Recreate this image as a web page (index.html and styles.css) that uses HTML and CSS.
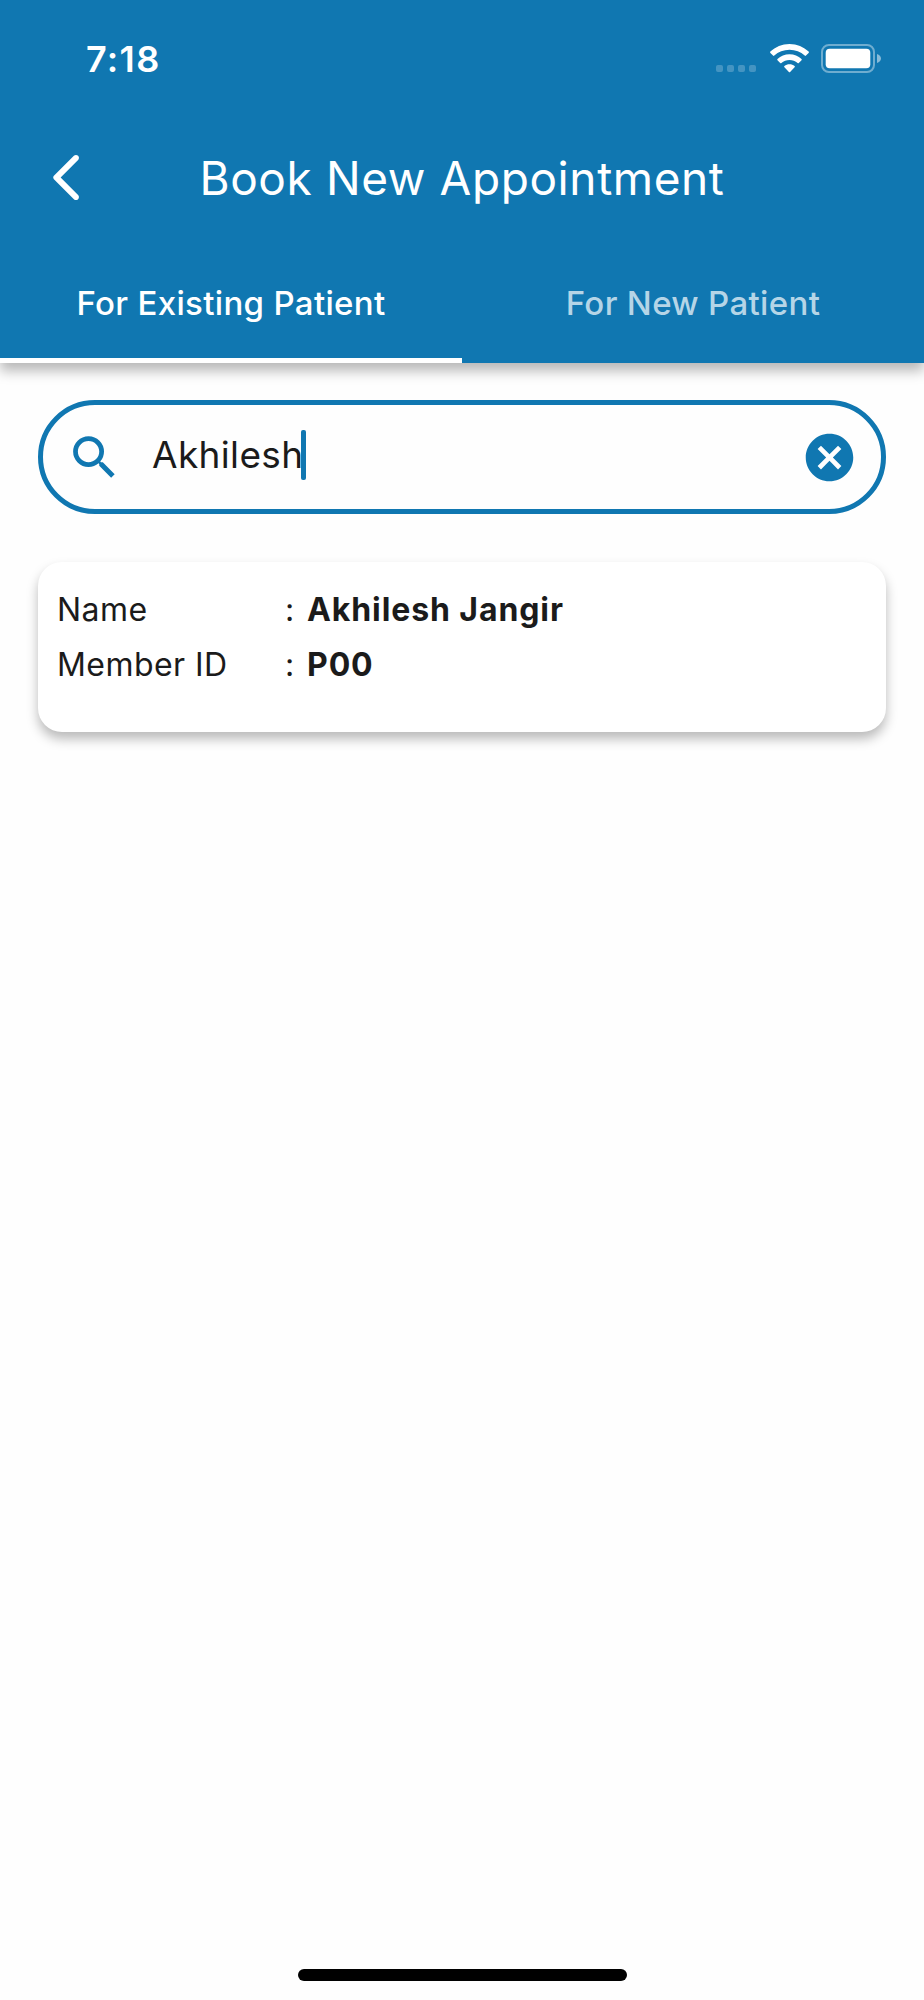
FILE: index.html
```html
<!DOCTYPE html>
<html lang="en">
<head>
<meta charset="utf-8">
<title>Book New Appointment</title>
<link rel="stylesheet" href="styles.css">
</head>
<body>
<div class="screen">
  <header class="header">
    <div class="status-bar">
      <span class="time">7:18</span>
      <div class="status-icons">
        <div class="signal"><i></i><i></i><i></i><i></i></div>
        <svg class="wifi" viewBox="0 0 39 29">
          <path d="M19.5 0C12 0 5.300 2.900 .4 7.600a.9.900 0 0 0 0 1.300l2.600 2.700a.9.900 0 0 0 1.300 0C8.300 7.900 13.600 5.800 19.500 5.800s11.200 2.100 15.200 5.800a.9.900 0 0 0 1.300 0l2.600-2.700a.9.900 0 0 0 0-1.300C33.700 2.900 27 0 19.500 0z"/>
          <path d="M19.500 10.300c-4.600 0-8.800 1.800-12 4.600a.9.900 0 0 0 0 1.300l2.700 2.700a.9.900 0 0 0 1.200 0c2.200-1.800 5-2.900 8.100-2.900s5.900 1.100 8.100 2.900a.9.900 0 0 0 1.200 0l2.700-2.700a.9.900 0 0 0 0-1.300c-3.200-2.800-7.400-4.600-12-4.600z"/>
          <path d="M19.500 20.300c-1.900 0-3.700.6-5.100 1.700a.8.800 0 0 0 0 1.200l4.500 4.700a.8.800 0 0 0 1.200 0l4.500-4.700a.8.800 0 0 0 0-1.200c-1.400-1.100-3.200-1.700-5.100-1.700z"/>
        </svg>
        <svg class="battery" viewBox="0 0 60 29">
          <rect class="battery-shell" x="1" y="1" width="52" height="27" rx="7"/>
          <rect x="4.700" y="4.700" width="44.600" height="19.600" rx="4"/>
          <path class="battery-tip" d="M56 10c2.300.6 4 2.400 4 4.500s-1.700 3.900-4 4.500z"/>
        </svg>
      </div>
    </div>
    <div class="toolbar">
      <svg class="back" viewBox="0 0 24 24"><path d="M16.880 2.880c-.49-.49-1.280-.49-1.770 0L6.700 11.290c-.39.39-.39 1.020 0 1.410l8.410 8.410c.49.49 1.280.49 1.770 0s.49-1.280 0-1.770L9.540 12l7.350-7.350c.48-.49.48-1.280-.01-1.770z"/></svg>
      <h1 class="title">Book New Appointment</h1>
    </div>
    <nav class="tabs">
      <div class="tab active">For Existing Patient</div>
      <div class="tab">For New Patient</div>
    </nav>
  </header>
  <main class="content">
    <div class="search">
      <svg class="icon" viewBox="0 0 24 24"><path d="M15.500 14h-.79l-.28-.27A6.471 6.471 0 0 0 16 9.500 6.500 6.500 0 1 0 9.500 16c1.610 0 3.090-.59 4.230-1.570l.27.28v.79l5 4.990L20.490 19l-4.990-5zm-6 0C7.010 14 5 11.990 5 9.500S7.010 5 9.500 5 14 7.010 14 9.500 11.990 14 9.500 14z"/></svg>
      <div class="query"><span>Akhilesh</span><span class="caret"></span></div>
      <svg class="icon" viewBox="0 0 24 24"><path d="M12 2C6.470 2 2 6.470 2 12s4.470 10 10 10 10-4.470 10-10S17.530 2 12 2zm5 13.590L15.590 17 12 13.410 8.410 17 7 15.590 10.590 12 7 8.410 8.410 7 12 10.590 15.590 7 17 8.410 13.410 12 17 15.590z"/></svg>
    </div>
    <section class="card">
      <div class="row"><span class="label">Name</span><span class="colon">:</span><span class="value">Akhilesh Jangir</span></div>
      <div class="row"><span class="label">Member ID</span><span class="colon">:</span><span class="value">P00</span></div>
    </section>
  </main>
  <footer class="home"><div class="home-bar"></div></footer>
</div>
</body>
</html>
```
FILE: styles.css
```css
* { box-sizing: border-box; }
body { margin: 0; background: #fefefe; color: #1b1b1b; font-family: Inter, sans-serif; }
.screen { display: flex; flex-direction: column; height: 2000px; }
.header { height: 362.500px; background: #1077b1; color: #fff; box-shadow: 0 8px 12px rgba(0,0,0,.28); }
svg { display: block; fill: currentColor; flex: none; }

.status-bar { display: flex; justify-content: space-between; align-items: flex-start; height: 111px; padding: 37px 43px 0 86px; }
.time { font-size: 36px; font-weight: 600; line-height: 44px; letter-spacing: 1.300px; }
.status-icons { display: flex; padding-top: 7px; }
.signal { display: flex; gap: 4px; width: 40px; margin-right: 14px; padding-top: 21px; }
.signal i { flex: none; width: 7px; height: 7px; border-radius: 2px; background: rgba(255,255,255,.22); }
.wifi { width: 39px; height: 29px; }
.battery { width: 60px; height: 29px; margin-left: 12px; }
.battery-shell { fill: none; stroke: #fff; stroke-opacity: .4; stroke-width: 2; }
.battery-tip { fill-opacity: .5; }

.toolbar { display: flex; align-items: center; height: 133px; padding: 0 38px; }
.back { width: 57px; height: 57px; }
.title { flex: 1; margin: 0; padding-right: 57px; text-align: center; font-size: 46px; font-weight: 400; line-height: 56px; letter-spacing: .6px; }

.tabs { display: grid; grid-template-columns: 1fr 1fr; height: 118.500px; }
.tab { padding-top: 38.500px; text-align: center; font-size: 33px; font-weight: 500; line-height: 40px; letter-spacing: .33px; color: #b5d5e7; }
.tab.active { color: #fff; border-bottom: 5px solid #fff; }

.content { flex: 1; padding: 37.500px 38px 0; }
.search { display: flex; align-items: center; height: 114px; padding: 0 23px; border: 5px solid #1077b1; border-radius: 57px; color: #1077b1; }
.icon { width: 57px; height: 57px; }
.query { display: flex; align-items: center; flex: 1; padding: 0 0 4px 29px; color: #1b1b1b; font-size: 37px; line-height: 46px; font-weight: 400; letter-spacing: .35px; }
.caret { width: 5px; height: 50px; margin-left: -2.500px; border-radius: 2px; background: #1077b1; }
.card { height: 170.500px; margin-top: 47.500px; padding: 20px 19px; border-radius: 24px; background: #fff; box-shadow: 0 7px 12px rgba(0,0,0,.27); }
.row { display: flex; height: 55px; font-size: 32px; line-height: 56px; }
.label { width: 228px; font-weight: 400; letter-spacing: .45px; }
.colon { width: 22px; font-weight: 400; }
.value { font-weight: 700; letter-spacing: .9px; }

.home { display: flex; justify-content: center; padding-bottom: 19px; }
.home-bar { width: 329px; height: 12px; border-radius: 6px; background: #000; }
```
